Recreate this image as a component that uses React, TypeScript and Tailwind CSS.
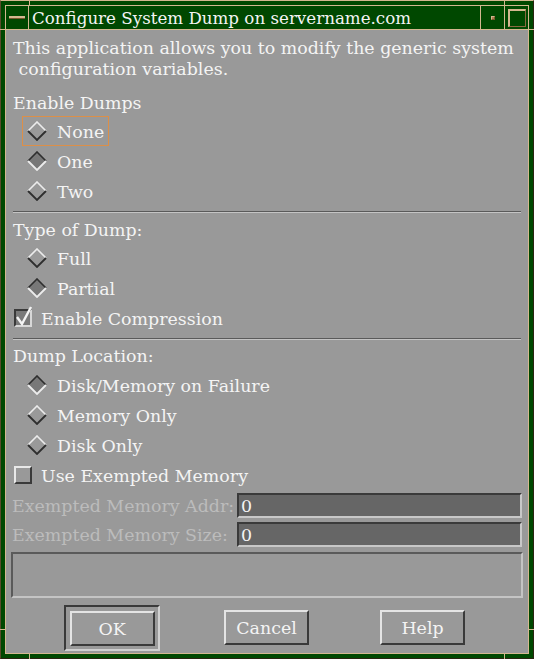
const serif = "font-['DejaVu_Serif',serif]";

const Diamond = ({ on }: { on?: boolean }) => (
  <svg width="20" height="20" viewBox="0 0 20 20" className="shrink-0">
    <polygon points="10,1 19,10 10,19 1,10" fill={on ? '#787878' : '#999999'} />
    <polyline points="1,10 10,1 19,10" fill="none" stroke={on ? '#2e2e2e' : '#ececec'} strokeWidth="1.6" />
    <polyline points="1,10 10,19 19,10" fill="none" stroke={on ? '#ececec' : '#2e2e2e'} strokeWidth="1.8" />
  </svg>
);

const Radio = ({ label, on, focus }: { label: string; on?: boolean; focus?: boolean }) => (
  <div className="h-[30px] flex items-center pl-[11px]">
    <div
      className={`h-[30px] flex items-center gap-[10px] pl-[4px] pr-[4px] border ${
        focus ? 'border-[#dc8f48]' : 'border-transparent'
      }`}
    >
      <Diamond on={on} />
      <span className="pt-[2px]">{label}</span>
    </div>
  </div>
);

const Check = ({ label, on }: { label: string; on?: boolean }) => (
  <div className="h-[30px] flex items-center gap-[9px] pl-[3px]">
    <div className="relative w-[18px] h-[18px] shrink-0">
      <div
        className={`w-[18px] h-[18px] border-2 ${
          on
            ? 'bg-[#7a7a7a] border-t-[#3a3a3a] border-l-[#3a3a3a] border-b-[#d8d8d8] border-r-[#d8d8d8]'
            : 'bg-[#999999] border-t-[#e8e8e8] border-l-[#e8e8e8] border-b-[#3a3a3a] border-r-[#3a3a3a]'
        }`}
      />
      {on && (
        <svg width="20" height="22" viewBox="0 0 20 22" className="absolute left-0 top-[-4px]">
          <polyline points="3,12 8,19 17,2" fill="none" stroke="#f4f4f4" strokeWidth="2.4" />
        </svg>
      )}
    </div>
    <span className="pt-[2px]">{label}</span>
  </div>
);

const Separator = ({ h = 'h-[11px]' }: { h?: string }) => (
  <div className={`${h} flex items-center mx-[2px]`}>
    <div className="w-full h-0 border-t border-b border-t-[#5a5a5a] border-b-[#c4c4c4]" />
  </div>
);

const Label = ({ children }: { children: React.ReactNode }) => (
  <div className="h-[22px] flex items-center pl-[2px] pt-[2px]">{children}</div>
);

const Field = ({ label }: { label: string }) => (
  <div className="grid grid-cols-[226px_1fr] items-center h-[25px] pr-[1px]">
    <span className="text-[#bcbcbc] pl-[1px] pt-[2px] whitespace-nowrap">{label}</span>
    <div className="h-[25px] bg-[#666666] border-2 border-t-[#3a3a3a] border-l-[#3a3a3a] border-b-[#c8c8c8] border-r-[#c8c8c8] flex items-center pl-[2px] pt-[2px]">
      0
    </div>
  </div>
);

const Button = ({ label }: { label: string }) => (
  <div className="w-[85px] h-[35px] flex items-center justify-center pt-[2px] border-2 border-t-[#e4e4e4] border-l-[#e4e4e4] border-b-[#3a3a3a] border-r-[#3a3a3a]">
    {label}
  </div>
);

export default function App() {
  return (
    <div
      className={`w-[534px] h-[659px] bg-[#004800] p-[4px] border border-t-[#d4b890] border-l-[#5a4a2a] border-r-[#2a2410] border-b-[#2a2410] relative ${serif} text-[17.4px] text-[#f4f4f4]`}
    >
      <div className="w-full h-full flex flex-col border border-[#d4b890]">
        {/* title bar */}
        <div className="h-[24px] flex border-b border-[#d4b890] bg-[#004800]">
          <div className="w-[23px] border-r border-[#d4b890] flex items-center justify-center">
            <div className="w-[16px] h-[3px] border-t-2 border-[#d4b890] border-b border-b-[#7a5a30]" />
          </div>
          <div className="flex-1 flex items-center pl-[3px] pt-[1px] border-r border-[#d4b890] leading-none text-[16.7px]">
            Configure System Dump on servername.com
          </div>
          <div className="w-[24px] border-r border-[#d4b890] flex items-center justify-center">
            <div className="w-[4px] h-[4px] border-t border-l border-[#d4b890] border-b border-r border-b-[#7a5a30] border-r-[#7a5a30] bg-[#b08050]" />
          </div>
          <div className="w-[23px] flex items-center justify-center">
            <div className="w-[18px] h-[18px] border-t-2 border-l-2 border-[#d4b890] border-b border-r border-b-[#8a6a40] border-r-[#8a6a40]" />
          </div>
        </div>

        {/* body */}
        <div className="flex-1 bg-[#999999] flex flex-col px-[5px] pt-[8px]">
          <div className="pl-[2px] leading-[21px] whitespace-pre">
            <div>This application allows you to modify the generic system</div>
            <div> configuration variables.</div>
          </div>

          <div className="mt-[11px]">
            <Label>Enable Dumps</Label>
          </div>
          <div className="mt-[3px]">
            <Radio label="None" focus />
            <Radio label="One" on />
            <Radio label="Two" />
          </div>
          <Separator h="h-[12px]" />

          <Label>Type of Dump:</Label>
          <div className="mt-[3px]">
            <Radio label="Full" />
            <Radio label="Partial" on />
            <Check label="Enable Compression" on />
          </div>
          <Separator />

          <Label>Dump Location:</Label>
          <div className="mt-[4px]">
            <Radio label="Disk/Memory on Failure" on />
            <Radio label="Memory Only" />
            <Radio label="Disk Only" />
            <Check label="Use Exempted Memory" />
          </div>

          <div className="mt-[1px] flex flex-col gap-[4px]">
            <Field label="Exempted Memory Addr:" />
            <Field label="Exempted Memory Size:" />
          </div>

          <div className="mt-[7px] h-[46px] border-2 border-t-[#5a5a5a] border-l-[#5a5a5a] border-b-[#c4c4c4] border-r-[#c4c4c4]" />

          <div className="mt-[7px] flex items-start">
            <div className="ml-[53px] w-[96px] h-[46px] border-2 border-t-[#3a3a3a] border-l-[#3a3a3a] border-b-[#d0d0d0] border-r-[#d0d0d0] flex items-center justify-center">
              <Button label="OK" />
            </div>
            <div className="ml-[64px] mt-[5px]">
              <Button label="Cancel" />
            </div>
            <div className="ml-[71px] mt-[5px]">
              <Button label="Help" />
            </div>
          </div>
        </div>
      </div>

      {/* resize handle ticks on the frame */}
      <div className="absolute left-[28px] top-[-1px] w-[1px] h-[5px] bg-[#d4b890]" />
      <div className="absolute left-[-1px] top-[28px] w-[5px] h-[1px] bg-[#d4b890]" />
      <div className="absolute right-[28px] top-[-1px] w-[1px] h-[5px] bg-[#d4b890]" />
      <div className="absolute right-[-1px] top-[28px] w-[5px] h-[1px] bg-[#d4b890]" />
      <div className="absolute left-[28px] bottom-[-1px] w-[1px] h-[5px] bg-[#d4b890]" />
      <div className="absolute left-[-1px] bottom-[28px] w-[5px] h-[1px] bg-[#d4b890]" />
      <div className="absolute right-[28px] bottom-[-1px] w-[1px] h-[5px] bg-[#d4b890]" />
      <div className="absolute right-[-1px] bottom-[28px] w-[5px] h-[1px] bg-[#d4b890]" />
    </div>
  );
}
